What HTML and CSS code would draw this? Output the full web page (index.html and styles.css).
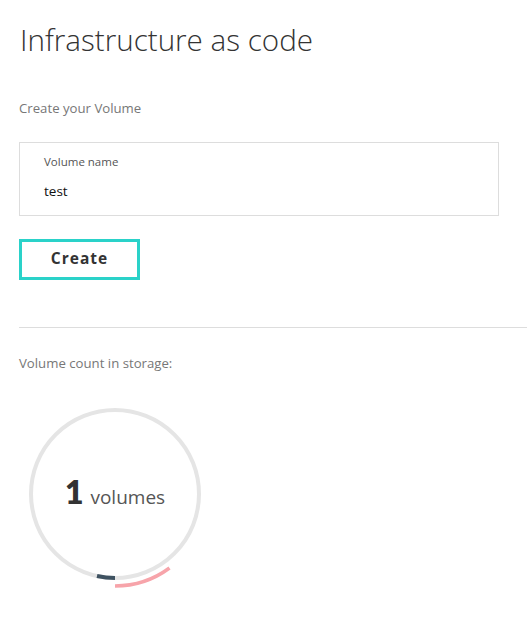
FILE: index.html
```html
<!DOCTYPE html>
<html>
<head>
<meta charset="utf-8">
<link rel="stylesheet" href="styles.css">
</head>
<body>
<main class="page">
  <h1 class="title">Infrastructure as code</h1>
  <p class="section-label create-label">Create your Volume</p>
  <div class="field">
    <label class="field-label">Volume name</label>
    <div class="field-value">test</div>
  </div>
  <button class="btn">Create</button>
  <hr class="divider">
  <p class="section-label count-label">Volume count in storage:</p>
  <div class="meter">
    <svg class="meter-svg" width="200" height="200" viewBox="0 0 200 200">
      <circle cx="96" cy="96" r="84" fill="none" stroke="#e5e5e5" stroke-width="4"/>
      <path d="M 96 180 A 84 84 0 0 1 78 178" fill="none" stroke="#3f5261" stroke-width="4"/>
      <path d="M 96 188 A 92 92 0 0 0 150.5 170" fill="none" stroke="#f7a4aa" stroke-width="3.5"/>
    </svg>
    <div class="meter-text"><span class="meter-num">1</span><span class="meter-unit">volumes</span></div>
  </div>
</main>
</body>
</html>
```
FILE: styles.css
```css
* { box-sizing: border-box; }
html, body { margin: 0; padding: 0; background: #fff; }
body { font-family: "Open Sans", "Liberation Sans", sans-serif; color: #333; }
.page { padding: 18px 0 0 19px; }
.title {
  margin: 0;
  font-family: "Open Sans", sans-serif;
  font-weight: 300;
  font-size: 29.6px;
  line-height: 44px;
  color: #333;
  padding-left: 1px;
}
.section-label {
  margin: 0;
  font-size: 13.2px;
  color: #777;
  line-height: 18px;
}
.create-label { margin-top: 37px; }
.field {
  margin-top: 25px;
  width: 480px;
  height: 74px;
  border: 1px solid #ddd;
  padding: 10px 24px 0;
}
.field-label { display: block; font-size: 11.5px; color: #555; line-height: 18px; }
.field-value { margin-top: 11px; font-size: 13.5px; color: #111; line-height: 18px; }
.btn {
  display: block;
  margin-top: 23px;
  width: 121px;
  height: 41px;
  border: 3px solid #2ad2c9;
  background: #fff;
  font-family: "Open Sans", sans-serif;
  font-weight: 700;
  font-size: 15.5px;
  letter-spacing: 1px;
  color: #333;
  padding: 0 0 3px;
}
.divider {
  margin: 47px 0 0 0;
  border: 0;
  border-top: 1px solid #ddd;
  height: 0;
}
.count-label { margin-top: 26px; }
.meter {
  position: relative;
  margin-top: 26px;
  width: 200px;
  height: 200px;
}
.meter-svg { display: block; }
.meter-text {
  position: absolute;
  left: 0; top: 0;
  width: 192px; height: 192px;
  display: flex;
  align-items: baseline;
  justify-content: center;
  padding-top: 74px;
  gap: 7px;
}
.meter-num { font-size: 32px; font-weight: 800; color: #333; font-family: "Lato", sans-serif; }
.meter-unit { font-size: 19px; color: #555; font-weight: 400; }
```
